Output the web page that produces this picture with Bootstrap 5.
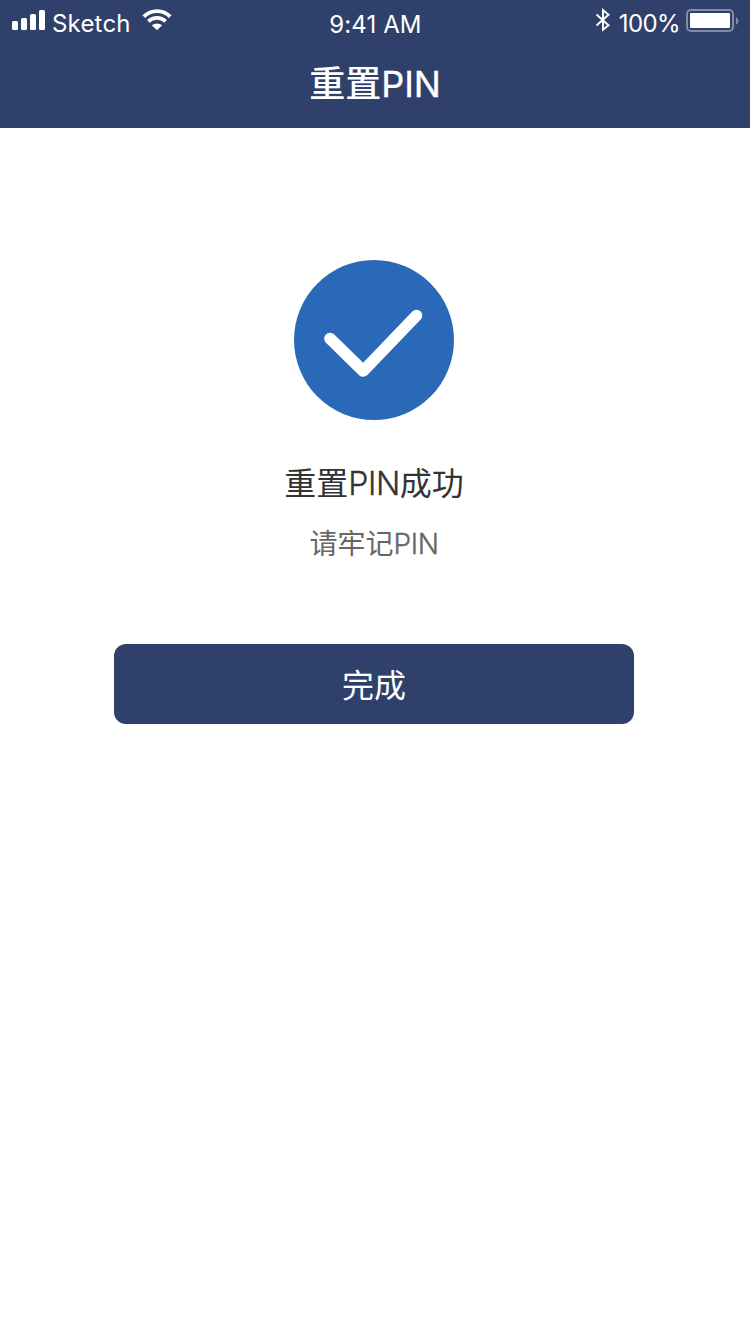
<!DOCTYPE html>
<html lang="zh-CN">
<head>
<meta charset="utf-8">
<meta name="viewport" content="width=device-width, initial-scale=1">
<title>重置PIN</title>
<link rel="stylesheet" href="https://cdn.jsdelivr.net/npm/bootstrap@5.3.0/dist/css/bootstrap.min.css">
<style>
  body { font-family: Inter, "Noto Sans CJK SC", sans-serif; color: #333; }
  .app-header { background: #2f406a; height: 128px; }
  .status-bar { height: 40px; font-size: 24px; line-height: 24px; padding: 0 11px 0 12px; }
  .status-bar svg { display: block; flex: none; }
  .carrier { margin: 12px 11px 0 7px; letter-spacing: .2px; }
  .clock { margin-top: 13px; letter-spacing: .1px; }
  .charge { margin: 12px 6px 0 8px; letter-spacing: -.6px; }
  .page-title { font-size: 36px; font-weight: 500; line-height: 88px; height: 88px; }
  .page-title .latin { font-weight: 400; letter-spacing: -.1px; -webkit-text-stroke: .35px; }
  .success-icon { margin: 132px 2px 0 0; }
  .result-title { font-size: 32px; line-height: 44px; margin: 42px 2px 0 0; }
  .result-note { font-size: 28px; line-height: 40px; color: #666; margin: 18px 2px 0 0; }
  .result-title .latin, .result-note .latin { font-weight: 300; letter-spacing: -.4px; -webkit-text-stroke: .35px; }
  .btn-done { --bs-btn-bg: #2f406a; --bs-btn-color: #fff; --bs-btn-hover-bg: #283759; --bs-btn-hover-color: #fff; width: 520px; height: 80px; border-radius: 12px; border: 0; font-size: 32px; line-height: 44px; margin: 80px 2px 0 0; padding: 9px 0 6px; }
</style>
</head>
<body class="bg-white">
<header class="app-header text-white">
  <div class="status-bar row g-0">
    <div class="col d-flex align-items-start">
      <svg width="33" height="40" fill="#fff"><rect y="21" width="6" height="9" rx="1.5"/><rect x="9" y="18" width="6" height="12" rx="1.5"/><rect x="18" y="14" width="6" height="16" rx="1.5"/><rect x="27" y="10" width="6" height="20" rx="1.5"/></svg>
      <span class="carrier">Sketch</span>
      <svg width="30" height="40" viewBox="0 0 30 40" fill="none" stroke="#fff"><path d="M1.800 16.700A18.600 18.600 0 0 1 28.200 16.700" stroke-width="3.800"/><path d="M6.400 21.400A12.200 12.200 0 0 1 23.600 21.400" stroke-width="3.600"/><path d="M9.800 25.300Q15 21.600 20.200 25.300L15 30.300Z" fill="#fff" stroke="none"/></svg>
    </div>
    <div class="col-auto clock">9:41 AM</div>
    <div class="col d-flex align-items-start justify-content-end">
      <svg width="16" height="40" viewBox="0 0 16 40" fill="none" stroke="#fff" stroke-width="1.900"><path d="M1.500 14.500 13.500 25.300 8 29.800V10L13.500 14.700 1.500 25.500"/></svg>
      <span class="charge">100%</span>
      <svg width="53" height="40" viewBox="0 0 53 40"><rect x="1" y="10" width="46" height="21" rx="4" fill="none" stroke="#828ca6" stroke-width="2"/><rect x="4" y="13" width="40" height="15" rx="1" fill="#fff"/><path d="M50 17a4.500 4.500 0 0 1 0 8z" fill="#828ca6"/></svg>
    </div>
  </div>
  <h1 class="page-title text-center m-0">重置<span class="latin">PIN</span></h1>
</header>
<main class="d-flex flex-column align-items-center">
  <svg class="success-icon" width="160" height="160" viewBox="0 0 160 160"><circle cx="80" cy="80" r="80" fill="#2969b8"/><path d="M36 78.500 69.200 111 122.500 55.500" fill="none" stroke="#fff" stroke-width="11.600" stroke-linecap="round" stroke-linejoin="round"/></svg>
  <h2 class="result-title fw-normal mb-0">重置<span class="latin">PIN</span>成功</h2>
  <p class="result-note mb-0">请牢记<span class="latin">PIN</span></p>
  <button type="button" class="btn btn-done">完成</button>
</main>
<script src="https://cdn.jsdelivr.net/npm/bootstrap@5.3.0/dist/js/bootstrap.bundle.min.js"></script>
</body>
</html>
